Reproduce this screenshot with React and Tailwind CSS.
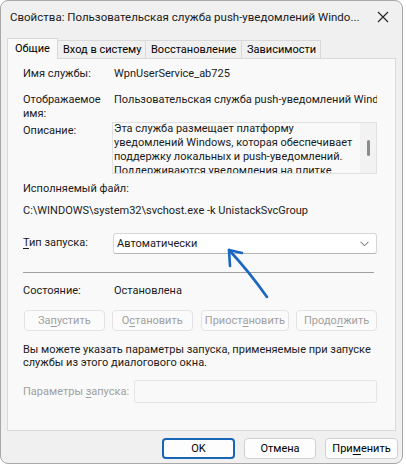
import React from "react";

const font = { fontFamily: '"Segoe UI", Roboto, "Liberation Sans", sans-serif' };

const Row = ({ label, children, className = "" }) => (
  <div className={`flex ${className}`}>
    <div className="w-[91px] shrink-0 whitespace-nowrap">{label}</div>
    <div className="flex-1 min-w-0">{children}</div>
  </div>
);

const DisabledButton = ({ children, w }) => (
  <div className={`${w} h-[21px] flex items-center justify-center border border-[#e3e3e3] bg-[#fbfbfb] rounded-[4px] text-[#a0a0a0] whitespace-nowrap`}>{children}</div>
);

export default function App() {
  return (
    <div className="w-[406px] h-[468px] bg-white text-[11px] leading-[14px] text-black relative overflow-hidden" style={font}>
      <div className="w-[403px] h-[464px] bg-[#f0f0f0] border border-[#a8a8a8] rounded-[8px] flex flex-col overflow-hidden">
        {/* title bar */}
        <div className="h-[32px] flex items-center pl-[9px] pr-[13px] shrink-0">
          <div className="flex-1 whitespace-nowrap text-[11.5px] text-[#1a1a1a]">Свойства: Пользовательская служба push-уведомлений Windo...</div>
          <svg width="12" height="12" viewBox="0 0 12 12" className="ml-2 shrink-0">
            <path d="M1 1L11 11M11 1L1 11" stroke="#222" strokeWidth="1.1" />
          </svg>
        </div>

        {/* tabs */}
        <div className="flex items-end px-[6px] h-[25px] shrink-0">
          <div className="w-[51px] h-[21px] pl-[7px] flex items-center bg-[#f9f9f9] border border-b-0 border-[#d9d9d9] relative top-[1px] z-10">Общие</div>
          <div className="w-[88px] h-[18px] pl-[5px] flex items-center border border-l-0 border-b-0 border-[#d9d9d9]">Вход в систему</div>
          <div className="w-[96px] h-[18px] pl-[5px] flex items-center border border-l-0 border-b-0 border-[#d9d9d9]">Восстановление</div>
          <div className="w-[79px] h-[18px] pl-[5px] flex items-center border border-l-0 border-b-0 border-[#d9d9d9]">Зависимости</div>
        </div>

        {/* panel */}
        <div className="mx-[6px] h-[373px] shrink-0 bg-[#f9f9f9] border border-[#d9d9d9] pl-[15px] pr-[18px] pt-[8px] text-[#1a1a1a]">
          <Row label="Имя службы:">WpnUserService_ab725</Row>
          <Row label={<div>Отображаемое<br />имя:</div>} className="mt-[12px]">
            <div className="whitespace-nowrap overflow-hidden">Пользовательская служба push-уведомлений Windows</div>
          </Row>
          <Row label={<div className="pt-[2px]">Описание:</div>} className="mt-[1px]">
            <div className="-ml-[2px] h-[52px] border border-[#e0e0e0] bg-[#f9f9f9] flex overflow-hidden">
              <div className="flex-1 pl-[1px] -mt-[1px] whitespace-nowrap overflow-hidden">
                Эта служба размещает платформу<br />уведомлений Windows, которая обеспечивает<br />поддержку локальных и push-уведомлений.<br />Поддерживаются уведомления на плитке,
              </div>
              <div className="w-[16px] shrink-0 bg-[#f2f2f2] flex justify-center">
                <div className="w-[3px] h-[16px] mt-[17px] rounded-full bg-[#8a8a8a]" />
              </div>
            </div>
          </Row>

          <div className="mt-[8px]">Исполняемый файл:</div>
          <div className="mt-[8px] whitespace-nowrap">C:\WINDOWS\system32\svchost.exe -k UnistackSvcGroup</div>

          <Row label={<div className="pt-[3px]"><span className="underline underline-offset-2">Т</span>ип запуска:</div>} className="mt-[15px]">
            <div className="h-[21px] -ml-[1px] bg-white border border-[#d6d6d6] border-b-[#b5b5b5] rounded-[3px] flex items-center pl-[3px] pr-[7px]">
              <div className="flex-1">Автоматически</div>
              <svg width="9" height="6" viewBox="0 0 9 6">
                <path d="M0.5 0.8L4.5 4.8L8.5 0.8" stroke="#555" strokeWidth="1" fill="none" />
              </svg>
            </div>
          </Row>

          <div className="mt-[18px] border-t border-[#a0a0a0] mr-[3px]" />

          <Row label="Состояние:" className="mt-[11px]">Остановлена</Row>

          <div className="mt-[12px] ml-[1px] flex gap-[7px]">
            <DisabledButton w="w-[82px]">За<span className="underline underline-offset-2">п</span>устить</DisabledButton>
            <DisabledButton w="w-[82px]">О<span className="underline underline-offset-2">с</span>тановить</DisabledButton>
            <DisabledButton w="w-[90px] ml-[1px]">Приост<span className="underline underline-offset-2">а</span>новить</DisabledButton>
            <DisabledButton w="w-[82px]">Продо<span className="underline underline-offset-2">л</span>жить</DisabledButton>
          </div>

          <div className="mt-[12px] leading-[13px]">Вы можете указать параметры запуска, применяемые при запуске<br />службы из этого диалогового окна.</div>

          <div className="mt-[11px] flex items-center">
            <div className="w-[111px] shrink-0 whitespace-nowrap text-[#a0a0a0]">Параметры <span className="underline underline-offset-2">з</span>апуска:</div>
            <div className="flex-1 h-[23px] border border-[#e5e5e5] bg-[#f9f9f9] rounded-[2px]" />
          </div>
        </div>

        {/* footer buttons */}
        <div className="flex justify-end gap-[9px] pr-[4px] pt-[7px]">
          <div className="w-[73px] h-[21px] border-2 border-[#1765b7] rounded-[4px] bg-[#fdfdfd] flex items-center justify-center">OK</div>
          <div className="w-[72px] h-[21px] border border-[#d0d0d0] rounded-[4px] bg-[#fdfdfd] flex items-center justify-center">Отмена</div>
          <div className="w-[73px] h-[21px] border border-[#d0d0d0] rounded-[4px] bg-[#fdfdfd] flex items-center justify-center">При<span className="underline underline-offset-2">м</span>енить</div>
        </div>
      </div>

      {/* hand-drawn arrow */}
      <svg className="absolute left-0 top-0 pointer-events-none" width="406" height="468" viewBox="0 0 406 468">
        <path d="M267 297 C255 280 242 264 229 250" stroke="#1a66c0" strokeWidth="2.6" fill="none" strokeLinecap="round" />
        <path d="M229 250 L230 266 M229 250 L242 253" stroke="#1a66c0" strokeWidth="2.6" fill="none" strokeLinecap="round" />
      </svg>
    </div>
  );
}
